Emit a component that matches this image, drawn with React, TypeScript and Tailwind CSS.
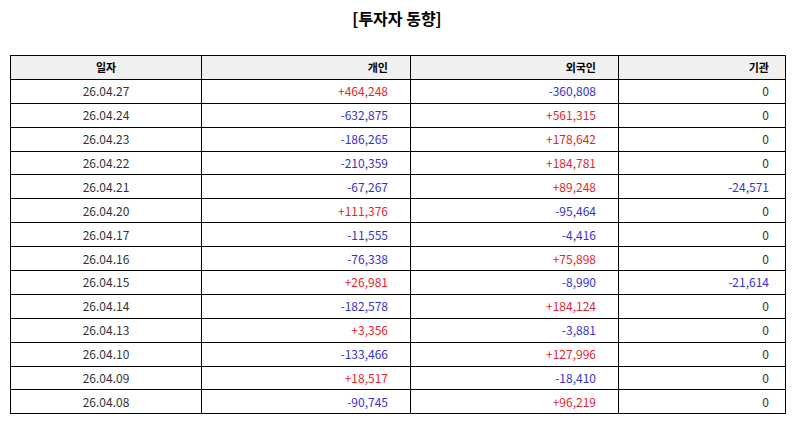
import React from "react";

// ─── Data ─────────────────────────────────────────────────────────────────────

interface Row {
  date:     string;
  personal: string;
  foreign:  string;
  inst:     string;
}

const ROWS: Row[] = [
  { date: "26.04.27", personal: "+464,248", foreign: "-360,808", inst: "0" },
  { date: "26.04.24", personal: "-632,875", foreign: "+561,315", inst: "0" },
  { date: "26.04.23", personal: "-186,265", foreign: "+178,642", inst: "0" },
  { date: "26.04.22", personal: "-210,359", foreign: "+184,781", inst: "0" },
  { date: "26.04.21", personal: "-67,267",  foreign: "+89,248",  inst: "-24,571" },
  { date: "26.04.20", personal: "+111,376", foreign: "-95,464",  inst: "0" },
  { date: "26.04.17", personal: "-11,555",  foreign: "-4,416",   inst: "0" },
  { date: "26.04.16", personal: "-76,338",  foreign: "+75,898",  inst: "0" },
  { date: "26.04.15", personal: "+26,981",  foreign: "-8,990",   inst: "-21,614" },
  { date: "26.04.14", personal: "-182,578", foreign: "+184,124", inst: "0" },
  { date: "26.04.13", personal: "+3,356",   foreign: "-3,881",   inst: "0" },
  { date: "26.04.10", personal: "-133,466", foreign: "+127,996", inst: "0" },
  { date: "26.04.09", personal: "+18,517",  foreign: "-18,410",  inst: "0" },
  { date: "26.04.08", personal: "-90,745",  foreign: "+96,219",  inst: "0" },
];

function tone(v: string): string {
  if (v.startsWith("+")) return "text-[#e0262e]";
  if (v.startsWith("-")) return "text-[#3333cc]";
  return "text-[#333333]";
}

// ─── Component ────────────────────────────────────────────────────────────────

export default function App() {
  return (
    <div
      className="w-[794px] h-[424px] bg-white text-[#333333]"
      style={{ fontFamily: '"Noto Sans CJK KR", "Noto Sans", sans-serif' }}
    >
      <h1 className="pt-[6px] text-center text-[16px] font-bold leading-[24px] text-black">
        [투자자 동향]
      </h1>

      <table className="ml-[10px] mt-[25px] w-[775px] table-fixed border-collapse text-[12px]">
        <colgroup>
          <col className="w-[191px]" />
          <col className="w-[209px]" />
          <col className="w-[208px]" />
          <col className="w-[167px]" />
        </colgroup>
        <thead>
          <tr className="bg-[#f0f0f0] text-[11px] font-bold text-black">
            <th className="h-[23.9px] border border-black p-0 text-center">일자</th>
            <th className="h-[23.9px] border border-black p-0 pr-[22px] text-right">개인</th>
            <th className="h-[23.9px] border border-black p-0 pr-[22px] text-right">외국인</th>
            <th className="h-[23.9px] border border-black p-0 pr-[16px] text-right">기관</th>
          </tr>
        </thead>
        <tbody>
          {ROWS.map((r) => (
            <tr key={r.date}>
              <td className="h-[23.9px] border border-black p-0 text-center">{r.date}</td>
              <td className={`h-[23.9px] border border-black p-0 pr-[22px] text-right ${tone(r.personal)}`}>{r.personal}</td>
              <td className={`h-[23.9px] border border-black p-0 pr-[22px] text-right ${tone(r.foreign)}`}>{r.foreign}</td>
              <td className={`h-[23.9px] border border-black p-0 pr-[16px] text-right ${tone(r.inst)}`}>{r.inst}</td>
            </tr>
          ))}
        </tbody>
      </table>
    </div>
  );
}
